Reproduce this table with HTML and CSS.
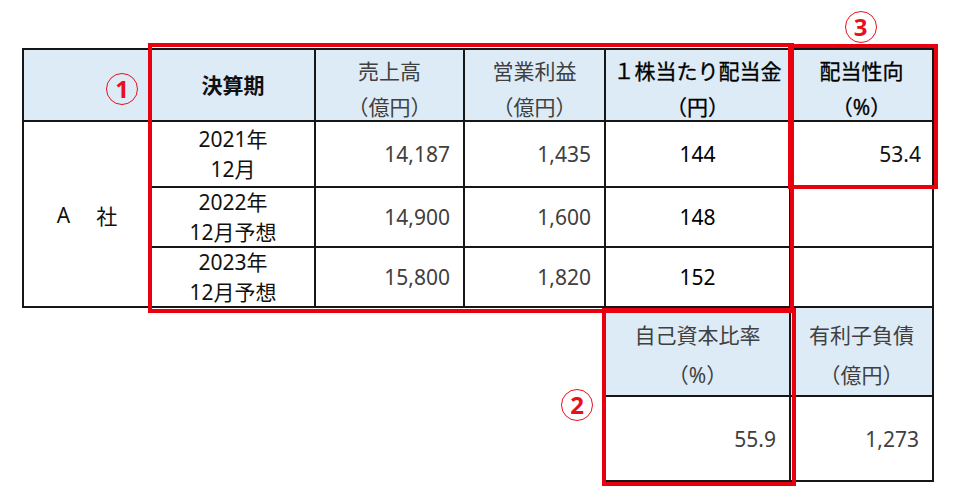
FILE: index.html
```html
<!DOCTYPE html>
<html lang="ja">
<head>
<meta charset="utf-8">
<title>A社</title>
<link rel="stylesheet" href="styles.css">
</head>
<body>
<div class="sheet">
  <div class="grid">
    <div class="note note3"><span class="circ">3</span></div>

    <div class="c h r-h first top note1"><span class="circ">1</span></div>
    <div class="c h r-h top dark bold single">決算期</div>
    <div class="c h r-h top"><span>売上高</span><span>（億円）</span></div>
    <div class="c h r-h top"><span>営業利益</span><span>（億円）</span></div>
    <div class="c h r-h top dark med"><span>１株当たり配当金</span><span>（円）</span></div>
    <div class="c h r-h top dark med"><span>配当性向</span><span>（%）</span></div>

    <div class="c first company">A<span class="gap">　</span>社</div>
    <div class="c r1 year"><span>2021年</span><span>12月</span></div>
    <div class="c r1 num">14,187</div>
    <div class="c r1 num">1,435</div>
    <div class="c r1 mid">144</div>
    <div class="c r1 num dark">53.4</div>

    <div class="c r2 year"><span>2022年</span><span>12月予想</span></div>
    <div class="c r2 num">14,900</div>
    <div class="c r2 num">1,600</div>
    <div class="c r2 mid">148</div>
    <div class="c r2"></div>

    <div class="c r3 year"><span>2023年</span><span>12月予想</span></div>
    <div class="c r3 num">15,800</div>
    <div class="c r3 num">1,820</div>
    <div class="c r3 mid">152</div>
    <div class="c r3"></div>

    <div class="note2"><span class="circ">2</span></div>
    <div class="c h sub col5"><span>自己資本比率</span><span>（%）</span></div>
    <div class="c h sub col6"><span>有利子負債</span><span>（億円）</span></div>
    <div class="c num low col5">55.9</div>
    <div class="c num low col6">1,273</div>
  </div>

  <div class="redbox box1"></div>
  <div class="redbox box3"></div>
  <div class="redbox box2"></div>
</div>
</body>
</html>
```

FILE: styles.css
```css
* { box-sizing: border-box; }

body {
  margin: 0;
  background: #ffffff;
  font-family: "Noto Sans", "Noto Sans CJK JP", sans-serif;
  font-size: 21px;
  color: #404040;
}

.sheet {
  position: relative;
  width: 969px;
  height: 503px;
}

.grid {
  display: grid;
  grid-template-columns: 130px 164px 149px 141px 185px 143px;
  grid-template-rows: 48px 74px 66px 60px 60px 89px 85px;
  margin-left: 22px;
}

.c {
  border-right: 2px solid #161616;
  border-bottom: 2px solid #161616;
  display: flex;
  flex-direction: column;
  justify-content: center;
  align-items: center;
  white-space: nowrap;
}

.first { border-left: 2px solid #161616; grid-column: 1; }
.top { border-top: 2px solid #161616; }

.r-h { grid-row: 2; }
.r1 { grid-row: 3; }
.r2 { grid-row: 4; }
.r3 { grid-row: 5; }
.col5 { grid-column: 5; }
.col6 { grid-column: 6; }

.h {
  background: #ddebf7;
  line-height: 36px;
  padding-top: 8px;
}
.h.single { padding-top: 0; }

.sub {
  grid-row: 6;
  line-height: 40px;
  padding-top: 6px;
}
.low { grid-row: 7; }

.dark { color: #111111; }
.bold { font-weight: 700; }
.med { font-weight: 400; color: #000000; -webkit-text-stroke: 0.3px #000000; }

.note3 {
  grid-column: 6;
  grid-row: 1;
  display: flex;
  justify-content: center;
  align-items: flex-start;
  padding-top: 11px;
  padding-right: 4px;
}

.note1 {
  align-items: flex-end;
  padding-right: 12px;
}

.note2 {
  grid-column: 4;
  grid-row: 6 / span 2;
  border-right: 2px solid #161616;
  display: flex;
  justify-content: flex-end;
  align-items: flex-start;
  padding-top: 81px;
  padding-right: 11px;
}

.circ {
  display: inline-flex;
  align-items: center;
  justify-content: center;
  width: 32px;
  height: 32px;
  border: 1.6px solid #e8101c;
  border-radius: 50%;
  color: #e8101c;
  font-family: "Noto Sans", sans-serif;
  font-weight: 700;
  font-size: 24px;
  line-height: 1;
}

.company {
  grid-row: 3 / span 3;
  flex-direction: row;
  color: #111111;
  padding-top: 2px;
}
.gap { display: inline-block; width: 26px; }

.year {
  color: #111111;
  line-height: 30px;
}

.num {
  align-items: flex-end;
  padding-right: 13px;
}
.num.dark { padding-right: 11px; }

.mid {
  color: #000000;
}

.redbox {
  position: absolute;
  border: 4px solid #e8000f;
  pointer-events: none;
}
.box1 { left: 148px; top: 43px; width: 646px; height: 270px; }
.box3 { left: 788px; top: 44px; width: 150px; height: 145px; }
.box2 { left: 602px; top: 308px; width: 194px; height: 178px; }
```
